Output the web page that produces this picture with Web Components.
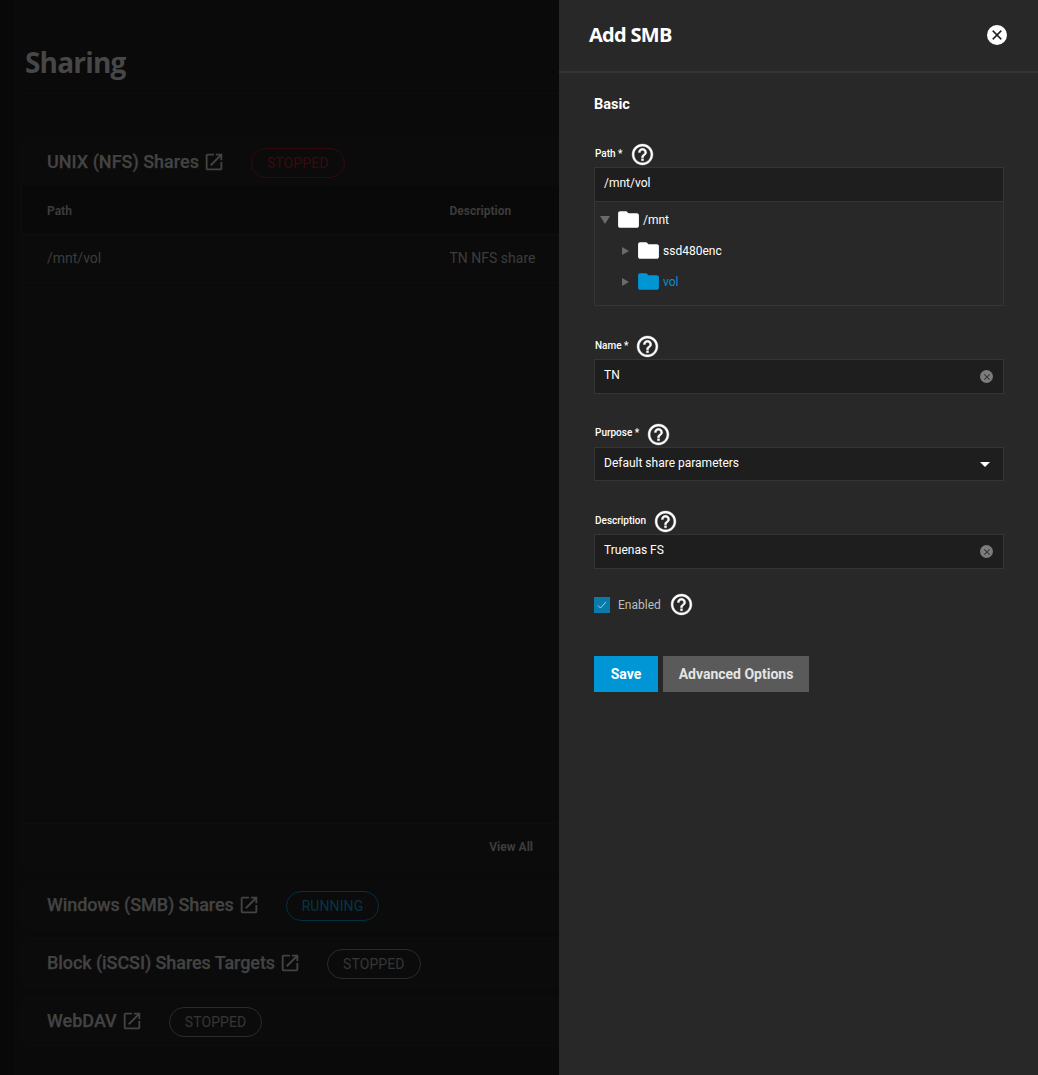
<!DOCTYPE html>
<html>
<head>
<meta charset="utf-8">
<title>Sharing</title>
<style>
  html, body { margin: 0; height: 100%; background: #0a0a0a; }
  body { font-family: Roboto, "Liberation Sans", sans-serif; overflow: hidden; }
</style>
</head>
<body>
<app-shell>
  <sharing-page>
    <share-card heading="UNIX (NFS) Shares" status="STOPPED" tone="red" expanded>
      <share-table></share-table>
    </share-card>
    <share-card heading="Windows (SMB) Shares" status="RUNNING" tone="blue" tracking="-.1"></share-card>
    <share-card heading="Block (iSCSI) Shares Targets" status="STOPPED" tracking="-.08"></share-card>
    <share-card heading="WebDAV" status="STOPPED"></share-card>
  </sharing-page>
  <side-panel heading="Add SMB">
    <smb-form></smb-form>
  </side-panel>
</app-shell>

<script>
const HELP_PATH = 'M11 18h2v-2h-2v2zm1-16C6.48 2 2 6.48 2 12s4.48 10 10 10 10-4.48 10-10S17.52 2 12 2zm0 18c-4.41 0-8-3.59-8-8s3.59-8 8-8 8 3.59 8 8-3.59 8-8 8zm0-14c-2.21 0-4 1.79-4 4h2c0-1.1.9-2 2-2s2 .9 2 2c0 2-3 1.75-3 5h2c0-2.25 3-2.5 3-5 0-2.21-1.79-4-4-4z';
const FOLDER_PATH = 'M10 4H4c-1.1 0-1.99.9-1.99 2L2 18c0 1.1.9 2 2 2h16c1.1 0 2-.9 2-2V8c0-1.1-.9-2-2-2h-8l-2-2z';
const OPEN_PATH = 'M19 19H5V5h7V3H5c-1.11 0-2 .9-2 2v14c0 1.1.89 2 2 2h14c1.1 0 2-.9 2-2v-7h-2v7zM14 3v2h3.59l-9.83 9.83 1.41 1.41L19 6.41V10h2V3h-7z';
const CLOSE_PATH = 'M19 6.41L17.59 5 12 10.59 6.41 5 5 6.41 10.59 12 5 17.59 6.41 19 12 13.41 17.59 19 19 17.59 13.41 12z';

class AppShell extends HTMLElement {
  constructor() {
    super();
    this.attachShadow({ mode: 'open' });
  }
  connectedCallback() {
    this.shadowRoot.innerHTML = `
      <style>
        :host { display: flex; height: 1075px; width: 1038px; overflow: hidden; }
      </style>
      <slot></slot>
    `;
  }
}

class SharingPage extends HTMLElement {
  constructor() {
    super();
    this.attachShadow({ mode: 'open' });
  }
  connectedCallback() {
    this.shadowRoot.innerHTML = `
      <style>
        :host { display: block; flex: 0 0 559px; width: 559px; box-sizing: border-box; padding: 0 0 0 8px; border-left: 13px solid #080808; background: #0a0a0a; overflow: hidden; }
        h1 {
          margin: 0 0 43px 2px;
          height: 94px;
          box-sizing: border-box;
          padding: 42px 0 0 2px;
          font: 700 28px/40px "Open Sans", sans-serif;
          letter-spacing: -.8px;
          color: #474747;
          border-bottom: 1px solid #0d0d0d;
        }
        .cards { display: flex; flex-direction: column; gap: 8px; }
      </style>
      <h1>Sharing</h1>
      <div class="cards"><slot></slot></div>
    `;
  }
}

class ShareCard extends HTMLElement {
  constructor() {
    super();
    this.attachShadow({ mode: 'open' });
  }
  connectedCallback() {
    const tone = this.getAttribute('tone') || 'grey';
    const tracking = this.getAttribute('tracking') || '0';
    this.shadowRoot.innerHTML = `
      <style>
        :host { display: block; background: #0b0b0b; border: 1px solid #0d0d0d; border-right: 0; border-radius: 8px 0 0 8px; }
        :host([expanded]) { height: 733px; }
        .head { display: flex; align-items: center; height: 48px; padding-left: 25px; }
        .title { font: 500 18px/24px Roboto, sans-serif; letter-spacing: ${tracking}px; -webkit-text-stroke: .25px #434343; color: #434343; white-space: nowrap; }
        svg { width: 22px; height: 22px; fill: #434343; margin-left: 4px; flex: none; }
        .pill {
          margin: 2px 0 0 26px; height: 30px; box-sizing: border-box; padding: 0 15px 1px;
          display: flex; align-items: center; border-radius: 15px;
          font: 400 14px/1 Roboto, sans-serif; letter-spacing: .1px; white-space: nowrap;
        }
        .pill.grey { color: #363636; border: 1px solid #2b2b2b; }
        .pill.red { color: #3c0a0e; border: 1px solid #330a0d; }
        .pill.blue { color: #053547; border: 1px solid #04303f; }
      </style>
      <div class="head">
        <span class="title">${this.getAttribute('heading')}</span>
        <svg viewBox="0 0 24 24"><path d="${OPEN_PATH}"/></svg>
        <span class="pill ${tone}">${this.getAttribute('status')}</span>
      </div>
      <slot></slot>
    `;
  }
}

class ShareTable extends HTMLElement {
  constructor() {
    super();
    this.attachShadow({ mode: 'open' });
  }
  connectedCallback() {
    this.shadowRoot.innerHTML = `
      <style>
        :host { display: flex; flex-direction: column; height: 685px; }
        .row { display: grid; grid-template-columns: 402.5px 1fr; padding-left: 25px; align-items: center; white-space: nowrap; box-sizing: border-box; }
        .hd { height: 49px; padding-top: 2px; background: #090909; font: 700 12px/1 Roboto, sans-serif; color: #3b3b3b; border-bottom: 1px solid #0e0e0e; }
        .bd { height: 48px; padding-bottom: 2px; font: 400 14px/1 Roboto, sans-serif; color: #3d3d3d; border-bottom: 1px solid #0e0e0e; }
        .spacer { flex: 1; }
        .foot { height: 48px; box-sizing: border-box; display: flex; align-items: center; justify-content: flex-end; padding: 0 26px 2px 0; border-top: 1px solid #0e0e0e; font: 700 12px/1 Roboto, sans-serif; color: #3d3d3d; }
      </style>
      <div class="row hd"><span>Path</span><span>Description</span></div>
      <div class="row bd"><span>/mnt/vol</span><span>TN NFS share</span></div>
      <div class="spacer"></div>
      <div class="foot">View All</div>
    `;
  }
}

class SidePanel extends HTMLElement {
  constructor() {
    super();
    this.attachShadow({ mode: 'open' });
  }
  connectedCallback() {
    this.shadowRoot.innerHTML = `
      <style>
        :host { display: block; flex: 1; background: #282828; color: #fff; }
        header { height: 73px; box-sizing: border-box; display: flex; align-items: center; justify-content: space-between; padding: 0 31px 2px 30px; border-bottom: 2px solid #353535; }
        h2 { margin: 0; font: 700 20px/1 "Open Sans", sans-serif; letter-spacing: -.7px; color: #fff; }
        .close { width: 20px; height: 20px; border-radius: 50%; background: #fff; display: flex; align-items: center; justify-content: center; }
        .close svg { width: 16px; height: 16px; fill: #1f1f1f; stroke: #1f1f1f; stroke-width: .5; }
      </style>
      <header>
        <h2>${this.getAttribute('heading')}</h2>
        <span class="close"><svg viewBox="0 0 24 24"><path d="${CLOSE_PATH}"/></svg></span>
      </header>
      <slot></slot>
    `;
  }
}

class HelpIcon extends HTMLElement {
  constructor() {
    super();
    this.attachShadow({ mode: 'open' });
  }
  connectedCallback() {
    this.shadowRoot.innerHTML = `
      <style>
        :host { display: inline-flex; width: 25px; height: 25px; flex: none; }
        svg { width: 25px; height: 25px; fill: #fff; stroke: #fff; stroke-width: .35; }
      </style>
      <svg viewBox="0 0 24 24"><path d="${HELP_PATH}"/></svg>
    `;
  }
}

class FormField extends HTMLElement {
  constructor() {
    super();
    this.attachShadow({ mode: 'open' });
  }
  connectedCallback() {
    const req = this.hasAttribute('required') ? ' *' : '';
    const isSelect = this.hasAttribute('select');
    let tail = '';
    if (this.hasAttribute('clear')) {
      tail = `<span class="clear"><svg viewBox="0 0 24 24"><path d="${CLOSE_PATH}"/></svg></span>`;
    } else if (isSelect) {
      tail = `<span class="caret"></span>`;
    }
    this.shadowRoot.innerHTML = `
      <style>
        :host { display: block; }
        .label { display: flex; align-items: center; height: 25px; padding-left: 1px; font: 500 10px/1 Roboto, sans-serif; color: #fff; }
        .label span { position: relative; top: ${isSelect ? -2 : -1}px; }
        help-icon { margin-left: 7px; }
        .box {
          height: ${isSelect ? 34 : 35}px; box-sizing: border-box; padding: 0 9px;
          display: flex; align-items: center; justify-content: space-between;
          background: #1e1e1e; border: 1px solid #353535;
          font: 400 12px/1 Roboto, sans-serif; color: #fff;
        }
        .value { position: relative; top: ${isSelect ? -1 : -2}px; }
        .clear { width: 13px; height: 13px; border-radius: 50%; background: #7c7c7c; display: flex; align-items: center; justify-content: center; margin-right: 1px; }
        .clear svg { width: 10px; height: 10px; fill: #2a2a2a; }
        .caret { width: 0; height: 0; border-left: 5px solid transparent; border-right: 5px solid transparent; border-top: 5px solid #fff; margin-right: 4px; }
      </style>
      <div class="label"><span>${this.getAttribute('label')}${req}</span><help-icon></help-icon></div>
      <div class="box"><span class="value">${this.getAttribute('value')}</span>${tail}</div>
      <slot></slot>
    `;
  }
}

class TreeNode extends HTMLElement {
  constructor() {
    super();
    this.attachShadow({ mode: 'open' });
  }
  connectedCallback() {
    const open = this.hasAttribute('open');
    const active = this.hasAttribute('active');
    this.shadowRoot.innerHTML = `
      <style>
        :host { display: flex; align-items: center; height: 31px; padding-left: ${this.getAttribute('indent') || 0}px; font: 400 12px/1 Roboto, sans-serif; color: ${active ? '#0a8fd6' : '#fff'}; }
        .arrow { width: 20px; display: flex; justify-content: center; }
        .open { border-left: 5px solid transparent; border-right: 5px solid transparent; border-top: 8px solid #6b6b6b; }
        .closed { border-top: 4px solid transparent; border-bottom: 4px solid transparent; border-left: 7px solid #6b6b6b; }
        svg { width: 25px; height: 25px; fill: ${active ? '#0095d5' : '#fff'}; margin-left: 1px; flex: none; }
        span.t { margin-left: 2px; }
      </style>
      <span class="arrow"><span class="${open ? 'open' : 'closed'}"></span></span>
      <svg viewBox="0 0 24 24"><path d="${FOLDER_PATH}"/></svg>
      <span class="t">${this.getAttribute('label')}</span>
    `;
  }
}

class SmbForm extends HTMLElement {
  constructor() {
    super();
    this.attachShadow({ mode: 'open' });
  }
  connectedCallback() {
    this.shadowRoot.innerHTML = `
      <style>
        :host { display: block; padding: 21px 34px 0 35px; font-family: Roboto, sans-serif; }
        h3 { margin: 0 0 26px; font: 700 14.5px/22px Roboto, sans-serif; color: #fff; }
        .tree { height: 104px; box-sizing: border-box; border: 1px solid #353535; border-top: 0; padding: 2px 0 0 0; }
        .stack { display: flex; flex-direction: column; }
        .enabled { display: flex; align-items: center; height: 25px; margin-top: 23px; font: 400 12px/1 Roboto, sans-serif; color: #bdbdbd; }
        .check { width: 16px; height: 16px; background: #0a7aa9; display: flex; align-items: center; justify-content: center; margin-right: 8px; }
        .check svg { width: 12px; height: 12px; fill: none; stroke: #a5cfe0; stroke-width: 2; }
        .enabled help-icon { margin-left: 8px; }
        .buttons { display: flex; gap: 5px; margin-top: 39px; }
        button { height: 36px; border: 0; padding: 0; color: #fff; font: 700 14px/1 Roboto, sans-serif; }
        .save { width: 64px; background: #0095d5; }
        .adv { width: 146px; background: #5a5a5a; color: #e4e4e4; }
      </style>
      <h3>Basic</h3>
      <div class="stack">
        <form-field label="Path" required value="/mnt/vol"></form-field>
        <div class="tree">
          <tree-node label="/mnt" open></tree-node>
          <tree-node label="ssd480enc" indent="20"></tree-node>
          <tree-node label="vol" indent="20" active></tree-node>
        </div>
        <form-field style="margin-top:28px" label="Name" required value="TN" clear></form-field>
        <form-field style="margin-top:28px" label="Purpose" required value="Default share parameters" select></form-field>
        <form-field style="margin-top:28px" label="Description" value="Truenas FS" clear></form-field>
      </div>
      <div class="enabled">
        <span class="check"><svg viewBox="0 0 24 24"><path d="M4 13l5 5L20 6"/></svg></span>
        <span>Enabled</span>
        <help-icon></help-icon>
      </div>
      <div class="buttons">
        <button class="save">Save</button>
        <button class="adv">Advanced Options</button>
      </div>
    `;
  }
}

customElements.define('app-shell', AppShell);
customElements.define('sharing-page', SharingPage);
customElements.define('share-card', ShareCard);
customElements.define('share-table', ShareTable);
customElements.define('side-panel', SidePanel);
customElements.define('help-icon', HelpIcon);
customElements.define('form-field', FormField);
customElements.define('tree-node', TreeNode);
customElements.define('smb-form', SmbForm);
</script>
</body>
</html>
